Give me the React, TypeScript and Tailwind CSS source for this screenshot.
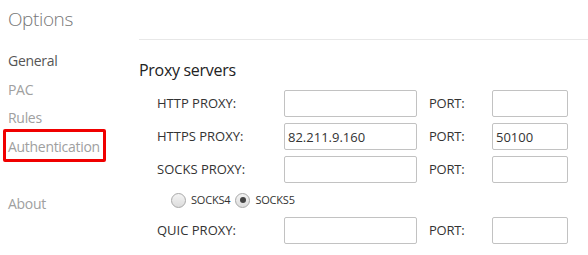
import React from "react";

const font = { fontFamily: '"Open Sans", "Noto Sans", sans-serif' };

function Field({ label, value, port }: { label: string; value?: string; port?: string }) {
  return (
    <div className="flex items-center h-[27px]">
      <span className="w-[127px] text-[13px] text-[#333]">{label}</span>
      <input
        readOnly
        value={value ?? ""}
        className="w-[133px] h-[27px] border border-[#c2c2c2] rounded-[2px] px-[3px] text-[13px] text-[#333] outline-none"
      />
      <span className="w-[75px] pl-[12px] text-[13px] text-[#333] tracking-[-0.2px]">PORT:</span>
      <input
        readOnly
        value={port ?? ""}
        className="w-[76px] h-[27px] border border-[#c2c2c2] rounded-[2px] px-[3px] text-[13px] text-[#333] outline-none"
      />
    </div>
  );
}

function Radio({ checked, label }: { checked?: boolean; label: string }) {
  return (
    <span className="flex items-center">
      <span className="w-[15px] h-[15px] rounded-full border border-[#a8a8a8] bg-gradient-to-b from-[#f4f4f4] to-[#dcdcdc] flex items-center justify-center">
        {checked && <span className="w-[6px] h-[6px] rounded-full bg-[#444]" />}
      </span>
      <span className="ml-[5px] text-[11px] text-[#333] tracking-[-0.2px]">{label}</span>
    </span>
  );
}

export default function App() {
  const nav = [
    { name: "General", active: true },
    { name: "PAC" },
    { name: "Rules" },
    { name: "Authentication" },
    { name: "" },
    { name: "About" },
  ];

  return (
    <div className="w-[588px] h-[255px] bg-white overflow-hidden relative" style={font}>
      <div className="h-[39px] pl-[8px] pt-[5px] text-[19px] text-[#777] font-light tracking-[-0.4px]">Options</div>
      <div className="flex">
        <div className="w-[139px] pt-[7px] pl-[8px]">
          {nav.map((n, i) => (
            <div
              key={i}
              className={`h-[28.7px] flex items-center text-[14px] tracking-[-0.3px] ${n.active ? "text-[#555]" : "text-[#a0a0a0]"}`}
            >
              {n.name}
            </div>
          ))}
        </div>
        <div className="flex-1 border-t border-[#e8e8e8] pt-[17px]">
          <div className="text-[16px] text-[#222] h-[26px] leading-[26px] tracking-[-0.3px]">Proxy servers</div>
          <div className="pl-[18px] pt-[7px] flex flex-col gap-[6px]">
            <Field label="HTTP PROXY:" />
            <Field label="HTTPS PROXY:" value="82.211.9.160" port="50100" />
            <Field label="SOCKS PROXY:" />
          </div>
          <div className="pl-[32px] h-[34px] flex items-center gap-[5px]">
            <Radio label="SOCKS4" />
            <Radio checked label="SOCKS5" />
          </div>
          <div className="pl-[18px]">
            <Field label="QUIC PROXY:" />
          </div>
        </div>
      </div>
      <div className="absolute left-[3px] top-[129px] w-[103px] h-[33px] border-[3px] border-[#f00000] rounded-[2px]" />
    </div>
  );
}
